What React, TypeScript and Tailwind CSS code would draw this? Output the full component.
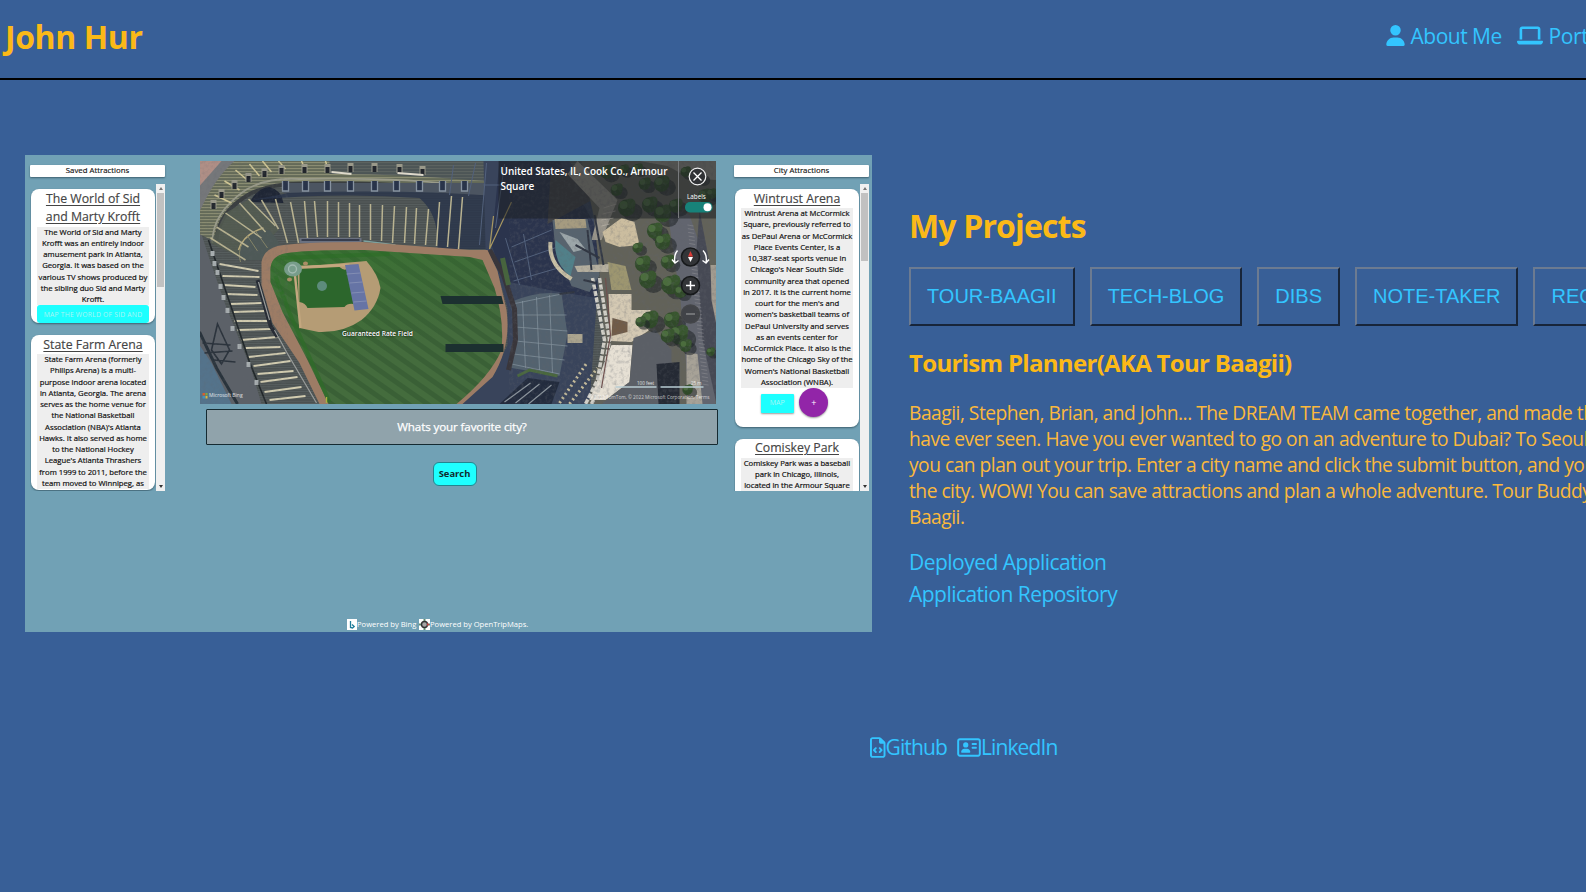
import type { ReactNode } from 'react';
import { FaUser, FaLaptop, FaRegFileCode, FaRegAddressCard } from 'react-icons/fa6';

const upperAisles = [
  [215, 195, 232, 203], [225, 181, 240, 190], [236, 170, 249, 181], [250, 164, 260, 176],
  [263, 161, 272, 172], [279, 161, 286, 169], [302, 161, 305, 168], [326, 161, 328, 168],
];

const lowerAisles = [
  [217, 227, 249, 247], [211, 238, 246, 260], [226, 213, 262, 238], [240, 203, 266, 232],
  [249, 199, 276, 226], [262, 200, 279, 229], [276, 199, 288, 243], [291, 202, 299, 243],
  [305, 201, 308, 238], [315, 201, 318, 237], [328, 201, 328, 237], [339, 202, 339, 237],
  [350, 203, 350, 237], [360, 205, 360, 237], [371, 204, 371, 240], [383, 205, 382, 241],
  [395, 206, 393, 243], [407, 207, 405, 243], [417, 208, 415, 244], [429, 209, 426, 245],
  [440, 202, 437, 246], [452, 196, 448, 247], [463, 197, 459, 249],
];

const fieldAisles = [
  [220, 264, 259, 271], [223, 276, 260, 277], [225, 285, 256, 287], [228, 294, 258, 295],
  [231, 304, 262, 303], [234, 312, 265, 311], [235, 321, 269, 321], [238, 330, 272, 329],
  [242, 340, 278, 337], [246, 348, 281, 347], [249, 357, 286, 353], [254, 366, 291, 361],
  [258, 374, 294, 371], [261, 382, 298, 377], [265, 392, 302, 387], [270, 400, 306, 396],
];

const boxes = [
  [214, 205], [222, 194], [235, 185], [249, 178], [265, 173], [282, 170],
  [305, 169], [328, 169], [351, 168], [375, 168], [400, 169], [423, 171],
];

const concourse = [286, 306, 328, 351, 375, 397, 420, 443, 465];

const trees = [
  [607, 172, 8], [624, 170, 6], [638, 169, 6], [617, 190, 7], [645, 184, 7], [662, 184, 9],
  [686, 172, 6], [701, 178, 6], [627, 208, 10], [650, 205, 9], [663, 214, 10], [676, 206, 8],
  [655, 231, 9], [663, 242, 9], [638, 248, 6], [643, 264, 9], [648, 280, 10], [668, 262, 8],
  [671, 285, 11], [681, 292, 7], [650, 320, 10], [641, 322, 6], [672, 320, 9], [679, 335, 11],
  [668, 336, 8], [686, 346, 7], [705, 196, 8], [712, 194, 6], [688, 390, 6], [711, 352, 5],
];

const cars = [
  [213, 253], [215, 263], [218, 272], [221, 286], [224, 297], [228, 310],
  [233, 328], [240, 346], [249, 364], [257, 382],
];

function Stadium() {
  return (
    <svg viewBox="200.5 161 515.5 242.5" preserveAspectRatio="none" className="block h-full w-full">
      <defs>
        <pattern id="rows" width="4" height="3" patternUnits="userSpaceOnUse">
          <rect width="4" height="3" fill="#646a58" />
          <rect width="4" height="1.1" fill="#8b8d72" />
        </pattern>
        <pattern id="seats" width="3" height="2.4" patternUnits="userSpaceOnUse">
          <rect width="3" height="2.4" fill="#4b5151" />
          <rect width="3" height="0.7" fill="#5a6161" />
        </pattern>
        <pattern id="mow" width="11" height="11" patternUnits="userSpaceOnUse" patternTransform="rotate(-55)">
          <rect width="11" height="11" fill="#446c3d" />
          <rect width="5" height="11" fill="#3a6036" />
        </pattern>
        <linearGradient id="light" x1="0" y1="0" x2="0.5" y2="1">
          <stop offset="0" stopColor="#2f7d28" stopOpacity="0.5" />
          <stop offset="0.75" stopColor="#2f6d28" stopOpacity="0" />
        </linearGradient>
        <filter id="grain" x="0" y="0" width="1" height="1">
          <feTurbulence type="fractalNoise" baseFrequency="0.28" numOctaves="3" seed="4" />
          <feColorMatrix values="0 0 0 0 0.12  0 0 0 0 0.13  0 0 0 0 0.15  1.8 0 0 0 -0.8" />
        </filter>
      </defs>
      <rect x="200" y="161" width="517" height="243" fill="url(#seats)" />

      {/* outside of the left stand */}
      <path d="M200 228L211 262L226 305L252 370L262 404H200Z" fill="#5c6168" />
      <path d="M200 345L212 363L232 404H200Z" fill="#54738b" />
      <path d="M200 332L217 368L238 404" stroke="#29333c" strokeWidth="3" fill="none" />
      <g stroke="#2b333c" strokeWidth="1.6" fill="none">
        <path d="M203 343L231 345M205 353L233 351M218 324L230 350L222 364L212 350ZM214 360L236 362" />
      </g>

      {/* upper deck */}
      <path d="M200 161H520V190Q400 182 290 183Q236 190 218 230L212 240L200 234Z" fill="url(#rows)" />
      <path d="M200 161H235Q215 178 200 212Z" fill="#75777a" />
      <path d="M200 161H222L200 186Z" fill="#b08f86" />
      <path d="M330 161H520V184Q410 174 330 174Z" fill="#3e4855" fillOpacity="0.6" />
      <path d="M213 243Q212 214 246 190Q268 177 300 179Q400 177 470 186L500 190" stroke="#9a9b8a" strokeWidth="1.8" fill="none" />
      <path d="M217 240Q219 212 250 194Q275 182 310 184Q400 181 500 196" stroke="#3a3e40" strokeWidth="4" fill="none" />
      <path d="M250 202Q258 188 270 187Q282 190 284 203Z" fill="#1f2635" />
      <path d="M252 200Q340 192 420 198Q440 215 438 249H500V190H300L284 194Z" fill="#29344a" fillOpacity="0.82" />
      <path d="M284 183H496V196Q400 189 284 193Z" fill="#4c5561" />
      <g stroke="#cfc594" strokeWidth="1.5">
        {upperAisles.map(([a, b, c, d]) => <line key={a} x1={a} y1={b} x2={c} y2={d} />)}
      </g>
      {boxes.map(([x, y]) => (
        <g key={x}>
          <rect x={x - 3} y={y - 5} width="6" height="9" fill="#9a998a" />
          <rect x={x - 2} y={y - 2} width="4" height="6" fill="#22262c" />
        </g>
      ))}
      {concourse.map((x) => (
        <path key={x} d={`M${x - 3} 181V191H${x + 3}V181`} stroke="#8793a0" strokeWidth="1.3" fill="#29344a" />
      ))}
      <path d="M332 172L352 174M398 173L424 175" stroke="#ded9cb" strokeWidth="2" />

      {/* lower bowl */}
      <path d="M226 213L250 199L279 230L262 247L246 260L211 243Z" fill="#545d50" fillOpacity="0.8" />
      <path d="M240 247L250 232L270 230L280 243L262 260H242Z" fill="#4e5957" />
      <path d="M239 250Q244 234 264 228" stroke="#b8aa7a" strokeWidth="1.6" fill="none" />
      <path d="M241 262Q238 252 243 243M248 236L258 251M256 231L268 248" stroke="#858467" strokeWidth="1" fill="none" />
      <g stroke="#b9b391" strokeWidth="1.5">
        {lowerAisles.map(([a, b, c, d]) => <line key={a} x1={a} y1={b} x2={c} y2={d} />)}
      </g>
      <g stroke="#d2ccb0" strokeWidth="1.9">
        {fieldAisles.map(([a, b, c, d]) => <line key={b} x1={a} y1={b} x2={c} y2={d} />)}
      </g>
      <path d="M209 240L230 302L250 362L267 404" stroke="#22282b" strokeWidth="1.6" fill="none" />
      {cars.map(([x, y]) => <rect key={y} x={x - 2} y={y - 2} width="4" height="5" fill="#a8aeb0" />)}
      <path d="M300 238H362V243H300Z" fill="#6b7180" />
      <path d="M302 240H360" stroke="#262d3d" strokeWidth="1.6" />
      <path d="M364 241L396 245" stroke="#7ea3a0" strokeWidth="1.4" />

      {/* outfield stands */}
      <path d="M484 161H570L600 215L598 290L590 404H452L493 377L508 345V308L497 268L486 249Z" fill="#39445b" />
      <path d="M500 161H560L598 230V298L560 292L505 281L492 245Z" fill="#2b344d" />
      <path d="M551 175L594 170L602 195L548 224Z" fill="#414246" />
      <path d="M511 302Q540 290 562 294L568 334L560 376L512 368L516 335Z" fill="#53626f" />
      <g stroke="#8998a3" strokeWidth="0.9" strokeOpacity="0.75" fill="none">
        <path d="M513 304L562 294M514 315L567 315M516 327L568 331M516 341L568 346M514 354L565 360M512 364L560 374" />
        <path d="M523 301L526 368M537 297L540 370M550 295L553 373" />
      </g>
      <g stroke="#52617c" strokeWidth="1" fill="none">
        <path d="M512 247L552 230M515 262L558 247M514 281L562 267M506 238L520 285M524 234L532 280" />
        <path d="M476 163L469 196M487 163L480 245M454 165L450 195M505 164L496 228M484 185H512" />
      </g>
      <path d="M494 216L490 249L512 202" stroke="#a99861" strokeWidth="1.2" fill="none" />
      <path d="M490 250L504 275L515 309L516 340L509 370" stroke="#39363b" strokeWidth="5" fill="none" />
      <path d="M503 258L509 285" stroke="#47643e" strokeWidth="5" />

      {/* warning track and grass */}
      <path d="M262 262Q264 250 278 246Q300 242 363 242L470 250L488 250L498 271L507 310Q512 346 493 377L463 404H320L300 363L273 323L262 285Z" fill="#9d7c65" />
      <path d="M271 272Q270 258 283 254Q300 250 365 250L470 257L483 260L495 288Q505 320 502 350Q491 376 457 404H329L308 360L283 312L271 282Z" fill="url(#mow)" />
      <path d="M271 272Q270 258 283 254Q300 250 365 250L470 257L483 260L495 288Q505 320 502 350Q491 376 457 404H329L308 360L283 312L271 282Z" fill="url(#light)" />
      <path d="M276 276L290 313L318 375L330 402M281 258L390 254" stroke="#2d6d27" strokeWidth="4" strokeOpacity="0.65" fill="none" />
      <path d="M298 267L367 261Q379 275 381 288Q378 307 362 320Q344 333 319 332L300 328Z" fill="#b59c75" />
      <path d="M300 269L340 267Q346 272 348 268L354 304Q348 303 345 307L308 308Q306 303 300 302Z" fill="#2c662c" />
      <path d="M295 271L301 328M299 267L350 265" stroke="#c4a77f" strokeWidth="2.4" />
      <path d="M345.500 265L359 264L369 309L355 310.500Z" fill="#6674a5" />
      <path d="M347 274L361 273M350 283L363 282M352 293L365 292M354 302L367 301" stroke="#8993b6" strokeWidth="0.8" />
      <ellipse cx="293.500" cy="269" rx="9" ry="7.500" fill="#789d8b" />
      <circle cx="293" cy="269" r="4" fill="none" stroke="#a1bab0" strokeWidth="1.400" />
      <circle cx="322.500" cy="286" r="5" fill="#5d8b7c" />
      <ellipse cx="306" cy="263.500" rx="2.500" ry="2" fill="#aa8d66" />
      <ellipse cx="290" cy="279.500" rx="2.500" ry="2" fill="#aa8d66" />
      <path d="M441 296H502L504 304H443ZM446 344H504V352H446Z" fill="#1c3030" />
      <path d="M258 280L271 326L278 337" stroke="#252a33" strokeWidth="4" fill="none" />
      <path d="M259 282L270 320M275 330L287 352L317 403" stroke="#9a9d9b" strokeWidth="1.2" fill="none" />
      <path d="M327 397V403" stroke="#aab43f" strokeWidth="1.400" />

      {/* plaza, street and buildings */}
      <path d="M582 161H717V404H588L605 345L600 270L594 215Z" fill="#626259" />
      <path d="M578 161L618 200L602 240H592L600 208L568 174Z" fill="#98948a" />
      <path d="M667 205L690 215L716 290V404H690L681 300Z" fill="#62656f" />
      <path d="M700 210L717 300V404L703 340L697 250Z" fill="#464954" />
      <path d="M711 265H717V325L712 300Z" fill="#a39c90" />
      <path d="M640 161H717V180L690 178L668 166Z" fill="#918e86" />
      <path d="M603 232L622 218L635 222L640 245L620 247L606 242Z" fill="#cbbd9f" />
      <path d="M608 262L626 266L632 290H612Z" fill="#9d9670" />
      <path d="M609 294L632 294V310H651L650 330L632 342L611 341Z" fill="#d4c9b3" />
      <path d="M613 318L628 322V332L612 336Z" fill="#715c48" />
      <path d="M612 345L633 345L630 382L606 400H590Z" fill="#e6e0d4" />
      <path d="M634 338L656 330L672 350V404H602L630 382Z" fill="#5b5f66" />
      <path d="M657 364L680 362V404H659Z" fill="#252a34" />
      <path d="M687 352L698 354L703 404H687Z" fill="#a7a297" />
      <path d="M553 220L588 219L600 275L590 292L572 286L556 250Z" fill="#57636e" />
      <path d="M555 219H586L587 228L556 229Z" fill="#a59b80" />
      <path d="M551 242Q549 262 566 275L572 279" stroke="#c8c0a5" strokeWidth="4" fill="none" />
      <path d="M556 240L576 257L571 276Q554 264 556 240Z" fill="#518089" />
      <path d="M560 232L578 239L586 249L574 252Z" fill="#9ca6a9" />
      <path d="M575 266L609 264V272H578Z" fill="#b5af9f" />
      <path d="M568 334H583V343H568Z" fill="#aca58f" />
      <path d="M593 278L605 340L598 380L586 404M600 278L610 340L603 382L592 404" stroke="#d2d0c8" strokeWidth="3.5" strokeDasharray="5 1.600" fill="none" />
      <path d="M606 278L611 335L602 388" stroke="#71504d" strokeWidth="1.200" fill="none" />
      <path d="M560 403L588 362M570 404L598 368" stroke="#c7bd9b" strokeWidth="3" strokeDasharray="2 3" />
      <path d="M588 230L592 270M595 215L604 265M576 245L600 258M584 280L597 283M560 294L575 292" stroke="#303642" strokeWidth="2" />
      <g stroke="#b1aca0" strokeWidth="0.9">
        <path d="M604 208L617 204M603 214L616 211M602 220L614 218M602 226L610 224" />
      </g>
      <path d="M500 404L528 378L560 382L552 404Z" fill="#232c3e" />
      <path d="M505 402L531 383M516 403L540 384M529 404L552 385" stroke="#8d969e" strokeWidth="1.200" />
      <path d="M518 376L530 370L558 376" stroke="#49683c" strokeWidth="3" fill="none" />
      <g stroke="#8b8c91" strokeWidth="0.6">
        {Array.from({ length: 44 }, (_, i) => (
          <line key={i} x1={688 + i * 0.35} y1={225 + i * 3.7} x2={694 + i * 0.35} y2={226 + i * 3.7} />
        ))}
      </g>
      {trees.map(([x, y, r]) => (
        <g key={`${x}-${y}`}>
          <ellipse cx={x + r * 0.6} cy={y + r * 0.4} rx={r} ry={r * 0.9} fill="#22272a" fillOpacity="0.6" />
          <circle cx={x} cy={y} r={r * 0.85} fill="#304a29" />
          <circle cx={x + r * 0.4} cy={y - r * 0.45} r={r * 0.5} fill="#38562e" />
          <circle cx={x - r * 0.3} cy={y - r * 0.3} r={r * 0.4} fill="#4b6d3d" />
        </g>
      ))}
      <rect x="200" y="161" width="88" height="243" filter="url(#grain)" opacity="0.25" />
      <rect x="510" y="161" width="207" height="243" filter="url(#grain)" opacity="0.4" />

      {/* map information panel */}
      <rect x="499" y="161" width="218" height="57.5" fill="#1e2024" fillOpacity="0.55" />
      <path d="M679 161V218" stroke="#77797b" strokeWidth="1" />
      <circle cx="698" cy="176.500" r="8.300" fill="#303235" stroke="#eee" strokeWidth="1.200" />
      <path d="M694 172.500L702 180.500M702 172.500L694 180.500" stroke="#fff" strokeWidth="1.300" />
      <rect x="685.500" y="202" width="27.500" height="10.500" rx="5" fill="#178279" />
      <circle cx="708" cy="207.300" r="4" fill="#fff" />
      {[257, 285.5, 314].map((y) => (
        <circle key={y} cx="691" cy={y} r="9" fill="#333538" fillOpacity={y > 300 ? 0.7 : 1} stroke={y > 300 ? '#444649' : '#17191b'} strokeWidth="1.500" />
      ))}
      <path d="M691 251L693.500 256.500H688.500Z" fill="#d83a35" />
      <path d="M688.500 257H693.500L691 262Z" fill="#fff" />
      <path d="M686.500 285.500H695.500M691 281V290" stroke="#fff" strokeWidth="1.500" />
      <path d="M686.500 314H695.500" stroke="#87898b" strokeWidth="1.400" />
      <path d="M678 250.500Q674 255 675.500 263M672.500 259.500L675.500 263L679 260.500M703.500 250.500Q708 255 706.500 263M703 260.500L706.500 263L709.500 259.500" stroke="#fff" strokeWidth="1.400" fill="none" />
      <path d="M616 387H657M661 387H704" stroke="#b8cbd2" strokeWidth="1.500" />
      <rect x="203" y="393" width="2.500" height="2.500" fill="#d5602e" />
      <rect x="206" y="393" width="2" height="2.500" fill="#86a83a" />
      <rect x="203" y="396" width="2.500" height="2.500" fill="#4293bd" />
      <rect x="206" y="396" width="2" height="2.500" fill="#e0b63b" />
    </svg>
  );
}

function MapView() {
  return (
    <div className="relative h-[242.5px] w-[515.5px] text-white">
      <Stadium />
      <p className="absolute left-[300.5px] top-[3px] text-[10px] leading-[15px] font-semibold tracking-[-0.05px] whitespace-nowrap">
        United States, IL, Cook Co., Armour<br />Square
      </p>
      <span className="absolute left-[487px] top-[32px] text-[6.3px] leading-[8px]">Labels</span>
      <span className="absolute left-[142px] top-[168px] text-[6.6px] leading-[10px] font-semibold whitespace-nowrap [text-shadow:0_0_2px_#000]">Guaranteed Rate Field</span>
      <span className="absolute left-[9px] top-[231px] text-[5px] leading-[7px] text-white/80">Microsoft Bing</span>
      <span className="absolute left-[437px] top-[219px] text-[4.5px] leading-[6px] text-white/80">100 feet</span>
      <span className="absolute left-[491px] top-[219px] text-[4.5px] leading-[6px] text-white/80">25 m</span>
      <span className="absolute left-[389px] top-[233px] text-[4.7px] leading-[7px] whitespace-nowrap text-white/70">© 2022 TomTom, © 2022 Microsoft Corporation, Terms</span>
    </div>
  );
}

function Lines({ lines }: { lines: string[] }) {
  return <>{lines.map((line) => <span key={line} className="block whitespace-nowrap">{line}</span>)}</>;
}

function Attraction({ title, lines, className, children }: { title: string[]; lines: string[]; className: string; children?: ReactNode }) {
  return (
    <article className={`w-[124px] shrink-0 overflow-hidden rounded-[8px] bg-white text-center shadow-[0_1px_2px_#3d6170] ${className}`}>
      <h3 className="pt-[0.5px] text-[12.3px] leading-[18.5px] text-[#444] underline decoration-1 underline-offset-2 [-webkit-text-stroke:0.15px_#444]"><Lines lines={title} /></h3>
      <p className="mx-[6px] bg-[#eeeeee] text-[7.7px] leading-[11.25px] text-[#111] [-webkit-text-stroke:0.2px_#111]"><Lines lines={lines} /></p>
      {children}
    </article>
  );
}

function Panel({ title, thumb, children }: { title: string; thumb: string; children: ReactNode }) {
  return (
    <section className="w-[135px]">
      <h2 className="h-[12px] rounded-[1px] bg-white text-center text-[7.8px] leading-[11px] text-[#111] shadow-[0_1px_2px_#3d6170] [-webkit-text-stroke:0.15px_#111]">{title}</h2>
      <div className="mt-[7px] flex h-[307px] overflow-hidden">
        <div className="flex w-[126px] flex-col gap-[12px] pt-[5px] pl-[1px]">{children}</div>
        <div className="flex w-[9px] flex-col items-center bg-[#f0f0f0]">
          <span className="flex h-[9px] items-center"><svg viewBox="0 0 4 3" className="w-[4px]"><path d="M0 3L2 0L4 3Z" fill="#777" /></svg></span>
          <span className={`w-[7px] bg-[#c1c1c1] ${thumb}`} />
          <span className="mt-auto flex h-[9px] items-center"><svg viewBox="0 0 4 3" className="w-[4px]"><path d="M0 0L2 3L4 0Z" fill="#333" /></svg></span>
        </div>
      </div>
    </section>
  );
}

function TourPreview() {
  return (
    <div className="flex h-[477px] w-[847px] shrink-0 flex-col bg-[#71a1b5] font-['Open_Sans','Noto_Sans',sans-serif]">
      <div className="flex pl-[5px]">
        <div className="pt-[10px]">
          <Panel title="Saved Attractions" thumb="h-[94px]">
            <Attraction
              className="h-[134px]"
              title={['The World of Sid', 'and Marty Krofft']}
              lines={['The World of Sid and Marty', 'Krofft was an entirely indoor', 'amusement park in Atlanta,', 'Georgia. It was based on the', 'various TV shows produced by', 'the sibling duo Sid and Marty', 'Krofft.']}
            >
              <button className="mx-[6px] block h-[18px] w-[112px] rounded-[3px] bg-[#1effff] pt-[1px] text-[6.8px] tracking-[0.2px] whitespace-nowrap text-[#a9f5f5]">MAP THE WORLD OF SID AND</button>
            </Attraction>
            <Attraction
              className="h-[155px]"
              title={['State Farm Arena']}
              lines={['State Farm Arena (formerly', 'Philips Arena) is a multi-', 'purpose indoor arena located', 'in Atlanta, Georgia. The arena', 'serves as the home venue for', 'the National Basketball', "Association (NBA)'s Atlanta", 'Hawks. It also served as home', 'to the National Hockey', "League's Atlanta Thrashers", 'from 1999 to 2011, before the', 'team moved to Winnipeg, as']}
            />
          </Panel>
        </div>
        <main className="ml-[35px] flex w-[517px] flex-col pt-[6px]">
          <MapView />
          <div className="mt-[5.5px] ml-[5.5px] flex h-[36px] w-[512px] items-center justify-center rounded-[1px] border border-[#152a31] bg-[#90a3ab] pl-[1px] text-[11.6px] tracking-[-0.12px] text-white [-webkit-text-stroke:0.25px_#fff]">Whats your favorite city?</div>
          <button className="mt-[17px] ml-[232.5px] h-[24px] w-[44px] rounded-[6px] border border-[#23858f] bg-[#1effff] text-[9.4px] font-bold text-[#102a2c]">Search</button>
        </main>
        <div className="ml-[17px] pt-[10px]">
          <Panel title="City Attractions" thumb="h-[68px]">
            <Attraction
              className="h-[237.5px]"
              title={['Wintrust Arena']}
              lines={['Wintrust Arena at McCormick', 'Square, previously referred to', 'as DePaul Arena or McCormick', 'Place Events Center, is a', '10,387-seat sports venue in', "Chicago's Near South Side", 'community area that opened', 'in 2017. It is the current home', "court for the men's and", "women's basketball teams of", 'DePaul University and serves', 'as an events center for', 'McCormick Place. It also is the', 'home of the Chicago Sky of the', "Women's National Basketball", 'Association (WNBA).']}
            >
              <div className="flex items-center justify-center gap-[5.5px] pr-[5px]">
                <button className="mt-[2px] h-[19px] w-[33px] rounded-[1px] bg-[#1effff] text-[7px] text-[#a9f5f5] shadow-[0_1px_2px_#0006]">MAP</button>
                <button className="size-[29px] rounded-full bg-[#9225a8] text-[9px] text-white shadow-[0_1px_2px_#0006]">+</button>
              </div>
            </Attraction>
            <Attraction
              className="h-[160px]"
              title={['Comiskey Park']}
              lines={['Comiskey Park was a baseball', 'park in Chicago, Illinois,', 'located in the Armour Square']}
            />
          </Panel>
        </div>
      </div>
      <footer className="mt-auto flex h-[16px] items-center pl-[322px] text-[7.6px] leading-[10px] text-white">
        <svg viewBox="0 0 10 11" className="h-[11px] w-[10px]"><rect width="10" height="11" fill="#fff" /><path d="M3.500 2V8.500L5.500 9L7.200 7.500L5 5.500" stroke="#207e9b" strokeWidth="1.300" fill="none" /></svg>
        <span className="w-[62px] whitespace-nowrap">Powered by Bing</span>
        <svg viewBox="0 0 11 11" className="h-[11px] w-[11px]"><rect width="11" height="11" fill="#fff" /><path d="M5.500 0V2M5.500 9V11M0 5.500H2M9 5.500H11" stroke="#608f72" strokeWidth="2" /><circle cx="5.500" cy="5.500" r="3" fill="#a5a5a5" stroke="#333" strokeWidth="1.400" /><path d="M8 4L11 5.500L8 7Z" fill="#bd4444" /></svg>
        <span className="whitespace-nowrap">Powered by OpenTripMaps.</span>
      </footer>
    </div>
  );
}

const projects = ['TOUR-BAAGII', 'TECH-BLOG', 'DIBS', 'NOTE-TAKER', 'RECIPE-BOOK'];

export default function App() {
  return (
    <div className="h-[892px] w-full overflow-hidden bg-[#385f97] font-['Open_Sans','Noto_Sans',sans-serif] text-[#33c5ff]">
      <header className="flex h-[80px] items-start justify-between border-b-2 border-black">
        <h1 className="pt-[15px] pl-[5px] text-[32px] leading-[43px] font-bold tracking-[-0.4px] text-[#fbb917]">John Hur</h1>
        <nav className="flex w-[200px] pt-[22px] text-[21px] leading-[29px] whitespace-nowrap">
          <a className="flex w-[131px] shrink-0"><FaUser className="mt-[3px] mr-[5.5px] h-[21px] w-[19px] shrink-0" /><span className="tracking-[-0.5px]">About Me</span></a>
          <a className="flex shrink-0"><FaLaptop className="mt-[3px] mr-[5.5px] h-[21px] w-[26px] shrink-0" /><span className="tracking-[-0.4px]">Portfolio</span></a>
        </nav>
      </header>

      <div className="flex pt-[75px] pl-[25px]">
        <TourPreview />
        <section className="ml-[37px] shrink-0 pt-[48.5px] whitespace-nowrap">
          <h2 className="text-[32px] leading-[43px] font-bold tracking-[-0.85px] text-[#fbb917]">My Projects</h2>
          <div className="mt-[20px] flex gap-[15px]">
            {projects.map((name) => (
              <button key={name} className="h-[59px] border-2 border-t-[#6c7b91] border-r-[#17253a] border-b-[#17253a] border-l-[#6c7b91] px-[16px] font-['Liberation_Sans',Arial,sans-serif] text-[20px] leading-[23px]">{name}</button>
            ))}
          </div>
          <h3 className="mt-[21px] text-[24px] leading-[32px] font-bold tracking-[-0.69px] text-[#fbb917]">Tourism Planner(AKA Tour Baagii)</h3>
          <p className="mt-[21px] text-[19.2px] leading-[26px] tracking-[-0.49px] text-[#fbb93c]">
            <Lines lines={[
              'Baagii, Stephen, Brian, and John... The DREAM TEAM came together, and made the best app you',
              'have ever seen. Have you ever wanted to go on an adventure to Dubai? To Seoul? With this app',
              'you can plan out your trip. Enter a city name and click the submit button, and you will see',
              'the city. WOW! You can save attractions and plan a whole adventure. Tour Buddy',
              'Baagii.',
            ]} />
          </p>
          <div className="mt-[16px] flex flex-col text-[21px] leading-[32.3px] tracking-[-0.53px]">
            <a>Deployed Application</a>
            <a>Application Repository</a>
          </div>
        </section>
      </div>

      <footer className="mt-[101px] flex pl-[870px] text-[21px] leading-[29px]">
        <a className="flex w-[87px]"><FaRegFileCode className="mt-[4px] h-[21px] w-[15.5px]" /><span className="tracking-[-0.85px]">Github</span></a>
        <a className="flex"><FaRegAddressCard className="mt-[4px] h-[21px] w-[24px]" /><span className="tracking-[-0.9px]">LinkedIn</span></a>
      </footer>
    </div>
  );
}
